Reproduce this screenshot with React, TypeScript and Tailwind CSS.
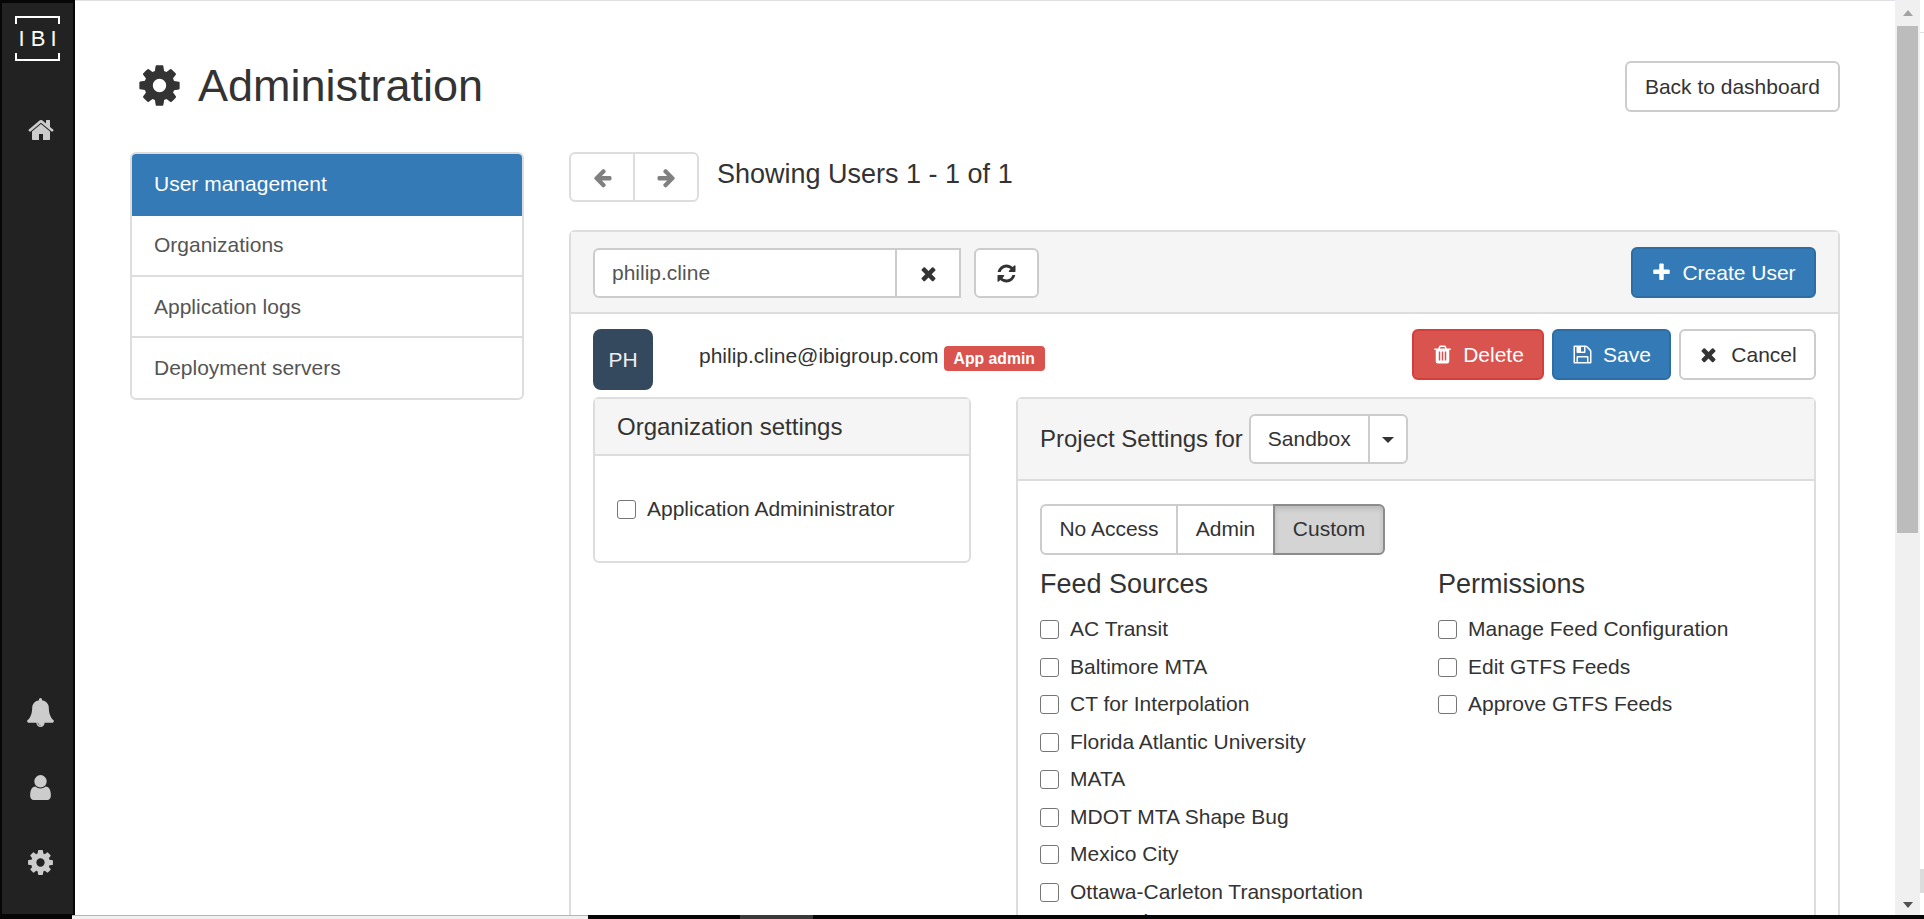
import React from "react";

const P = {
  cog: "M1152 896q0-106-75-181t-181-75-181 75-75 181 75 181 181 75 181-75 75-181zm512-109v222q0 12-8 23t-20 13l-185 28q-19 54-39 91 35 50 107 138 10 12 10 25t-9 23q-27 37-99 108t-94 71q-12 0-26-9l-138-108q-44 23-91 38-16 136-29 186-7 28-36 28h-222q-14 0-24.5-8.5t-11.5-21.5l-28-184q-49-16-90-37l-141 107q-10 9-25 9-14 0-25-11-126-114-165-168-7-10-7-23 0-12 8-23 15-21 51-66.5t54-70.5q-27-50-41-99l-183-27q-13-2-21-12.5t-8-23.5v-222q0-12 8-23t19-13l186-28q14-46 39-92-40-57-107-138-10-12-10-24 0-10 9-23 26-36 98.5-107.5t94.5-71.5q13 0 26 10l138 107q44-23 91-38 16-136 29-186 7-28 36-28h222q14 0 24.5 8.5t11.5 21.5l28 184q49 16 90 37l142-107q9-9 24-9 13 0 25 10 129 119 165 170 7 8 7 22 0 12-8 23-15 21-51 66.5t-54 70.5q26 50 41 98l183 28q13 2 21 12.5t8 23.5z",
  times: "M1490 1322q0 40-28 68l-136 136q-28 28-68 28t-68-28l-294-294-294 294q-28 28-68 28t-68-28l-136-136q-28-28-28-68t28-68l294-294-294-294q-28-28-28-68t28-68l136-136q28-28 68-28t68 28l294 294 294-294q28-28 68-28t68 28l136 136q28 28 28 68t-28 68l-294 294 294 294q28 28 28 68z",
  plus: "M1600 736v192q0 40-28 68t-68 28h-416v416q0 40-28 68t-68 28h-192q-40 0-68-28t-28-68v-416h-416q-40 0-68-28t-28-68v-192q0-40 28-68t68-28h416v-416q0-40 28-68t68-28h192q40 0 68 28t28 68v416h416q40 0 68 28t28 68z",
  left: "M1664 896v128q0 53-32.5 90.5t-84.5 37.5h-704l293 294q38 36 38 90t-38 90l-75 76q-37 37-90 37-52 0-91-37l-651-652q-37-37-37-90 0-52 37-91l651-650q38-38 91-38 52 0 90 38l75 74q38 38 38 91t-38 91l-293 293h704q52 0 84.5 37.5t32.5 90.5z",
  right: "M1600 960q0 54-37 91l-651 651q-39 37-91 37-51 0-90-37l-75-75q-38-38-38-91t38-91l293-293h-704q-52 0-84.5-37.5t-32.5-90.5v-128q0-53 32.5-90.5t84.5-37.5h704l-293-294q-38-36-38-90t38-90l75-75q38-38 90-38 53 0 91 38l651 651q37 35 37 90z",
  refresh: "M1639 1056q0 5-1 7-64 268-268 434.5t-478 166.5q-146 0-282.5-55t-243.5-157l-129 129q-19 19-45 19t-45-19-19-45v-448q0-26 19-45t45-19h448q26 0 45 19t19 45-19 45l-137 137q71 66 161 102t187 36q134 0 250-65t186-179q11-17 53-117 8-23 30-23h192q13 0 22.5 9.5t9.5 22.5zm25-800v448q0 26-19 45t-45 19h-448q-26 0-45-19t-19-45 19-45l138-138q-148-137-349-137-134 0-250 65t-186 179q-11 17-53 117-8 23-30 23h-199q-13 0-22.5-9.5t-9.5-22.5v-7q65-268 270-434.5t480-166.5q146 0 284 55.5t245 156.5l130-129q19-19 45-19t45 19 19 45z",
  home: "M1472 992v480q0 26-19 45t-45 19h-384v-384h-256v384h-384q-26 0-45-19t-19-45v-480q0-1 .5-3t.5-3l575-474 575 474q1 2 1 6zm223-69l-62 74q-8 9-21 11h-3q-13 0-21-7l-692-577-692 577q-12 8-24 7-13-2-21-11l-62-74q-8-10-7-23.5t11-21.5l719-599q32-26 76-26t76 26l244 204v-195q0-14 9-23t23-9h192q14 0 23 9t9 23v408l219 182q10 8 11 21.5t-7 23.5z",
  bell: "M912 1696q0-16-16-16-59 0-101.5-42.5t-42.5-101.5q0-16-16-16t-16 16q0 73 51.5 124.5t124.5 51.5q16 0 16-16zm816-288q0 52-38 90t-90 38h-448q0 106-75 181t-181 75-181-75-75-181h-448q-52 0-90-38t-38-90q50-42 91-88t85-119.5 74.5-158.5 50-206 19.5-260q0-152 117-282.5t307-158.5q-8-19-8-39 0-40 28-68t68-28 68 28 28 68q0 20-8 39 190 28 307 158.5t117 282.5q0 139 19.5 260t50 206 74.5 158.5 85 119.5 91 88z",
  user: "M1536 1399q0 109-62.5 187t-150.5 78h-854q-88 0-150.5-78t-62.5-187q0-85 8.5-160.5t31.5-152 58.5-131 94-89 134.5-34.5q131 128 313 128t313-128q76 0 134.5 34.5t94 89 58.5 131 31.5 152 8.5 160.5zm-256-887q0 159-112.5 271.5t-271.5 112.5-271.5-112.5-112.5-271.5 112.5-271.5 271.5-112.5 271.5 112.5 112.5 271.5z",
  trash: "M704 1376v-704q0-14-9-23t-23-9h-64q-14 0-23 9t-9 23v704q0 14 9 23t23 9h64q14 0 23-9t9-23zm256 0v-704q0-14-9-23t-23-9h-64q-14 0-23 9t-9 23v704q0 14 9 23t23 9h64q14 0 23-9t9-23zm256 0v-704q0-14-9-23t-23-9h-64q-14 0-23 9t-9 23v704q0 14 9 23t23 9h64q14 0 23-9t9-23zm-544-992h448l-48-117q-7-9-17-11h-317q-10 2-17 11zm928 32v64q0 14-9 23t-23 9h-96v948q0 83-47 143.5t-113 60.5h-832q-66 0-113-58.5t-47-141.5v-952h-96q-14 0-23-9t-9-23v-64q0-14 9-23t23-9h309l70-167q15-37 54-63t79-26h320q40 0 79 26t54 63l70 167h309q14 0 23 9t9 23z",
  save: "M512 1536h768v-384h-768v384zm896 0h128v-896q0-14-10-38.5t-20-34.5l-281-281q-10-10-34-20t-39-10v416q0 40-28 68t-68 28h-576q-40 0-68-28t-28-68v-416h-128v1280h128v-416q0-40 28-68t68-28h832q40 0 68 28t28 68v416zm-384-928v-320q0-13-9.5-22.5t-22.5-9.5h-192q-13 0-22.5 9.5t-9.5 22.5v320q0 13 9.5 22.5t22.5 9.5h192q13 0 22.5-9.5t9.5-22.5zm640 32v928q0 40-28 68t-68 28h-1344q-40 0-68-28t-28-68v-1344q0-40 28-68t68-28h928q40 0 88 20t76 48l280 280q28 28 48 76t20 88z",
};

function Icon({ d, className }: { d: string; className: string }) {
  return (
    <svg viewBox="0 0 1792 1792" className={className} fill="currentColor">
      <path d={d} />
    </svg>
  );
}

function Check({ label }: { label: string }) {
  return (
    <label className="flex items-start gap-[11px] mb-[7.5px] leading-[30px]">
      <input type="checkbox" className="appearance-none shrink-0 w-[19px] h-[19px] mt-[6px] bg-white border border-[#767676] rounded-[3px]" />
      <span>{label}</span>
    </label>
  );
}

const feeds = [
  "AC Transit",
  "Baltimore MTA",
  "CT for Interpolation",
  "Florida Atlantic University",
  "MATA",
  "MDOT MTA Shape Bug",
  "Mexico City",
  "Ottawa-Carleton Transportation Consortium",
];

export default function App() {
  return (
    <div className="w-[1924px] h-[919px] overflow-hidden flex flex-col bg-white text-[#333] text-[21px] font-['Liberation_Sans',Arial,sans-serif]">
      <div className="flex flex-1 min-h-0">
        {/* Sidebar */}
        <aside className="w-[75px] shrink-0 flex flex-col justify-between bg-[#222] border-l-2 border-r-2 border-t-[3px] border-b border-[#060606] text-[#ccc]">
          <div>
            <svg viewBox="0 0 45 45" className="w-[45px] h-[45px] mt-[13px] ml-[13px] text-white" fill="none" stroke="currentColor" strokeWidth="2">
              <path d="M1 8V1H44V8M1 37V44H44V37" />
              <text x="6.5" y="30" textAnchor="middle" fontFamily="Liberation Sans" fontSize="22" fill="currentColor" stroke="none">I</text>
              <text x="23" y="30" textAnchor="middle" fontFamily="Liberation Sans" fontSize="22" fill="currentColor" stroke="none">B</text>
              <text x="38.5" y="30" textAnchor="middle" fontFamily="Liberation Sans" fontSize="22" fill="currentColor" stroke="none">I</text>
            </svg>
            <div className="mt-[55px] ml-[25px]">
              <Icon d={P.home} className="w-[28px] h-[28px]" />
            </div>
          </div>
          <div className="flex flex-col items-center gap-[46px] pb-[37px] pl-[5px]">
            <Icon d={P.bell} className="w-[29px] h-[29px]" />
            <Icon d={P.user} className="w-[29px] h-[29px]" />
            <Icon d={P.cog} className="w-[29px] h-[29px]" />
          </div>
        </aside>

        {/* Main */}
        <main className="flex-1 min-w-0 overflow-hidden border-t border-[#dfe0e6] pl-[55px] pr-[55px]">
          <div className="flex items-center justify-between h-[51px] mt-[60px] mb-[40px]">
            <h1 className="flex items-center font-normal text-[45px] leading-none pl-[6px] pb-[2px]">
              <Icon d={P.cog} className="w-[47px] h-[47px] mr-[15px]" />
              Administration
            </h1>
            <button className="h-[51px] px-[18px] bg-white border-2 border-[#ccc] rounded-[6px]">Back to dashboard</button>
          </div>

          <div className="flex gap-[45px] items-start">
            {/* Left menu */}
            <nav className="w-[394px] shrink-0 border-2 border-[#ddd] rounded-[6px] overflow-hidden text-[#555]">
              <div className="h-[62px] flex items-center pl-[22px] pb-[2px] bg-[#337ab7] text-white">User management</div>
              <div className="h-[61px] flex items-center pl-[22px] pb-[1px] border-b-2 border-[#ddd]">Organizations</div>
              <div className="h-[61px] flex items-center pl-[22px] border-b-2 border-[#ddd]">Application logs</div>
              <div className="h-[60px] flex items-center pl-[22px]">Deployment servers</div>
            </nav>

            {/* Right column */}
            <div className="flex-1 min-w-0">
              <div className="flex items-start h-[50px] mb-[28px]">
                <div className="flex h-[50px] w-[130px] border-2 border-[#ddd] rounded-[6px] text-[#808080]">
                  <div className="w-[64px] flex items-center justify-center border-r-2 border-[#ddd]">
                    <Icon d={P.left} className="w-[21px] h-[21px]" />
                  </div>
                  <div className="flex-1 flex items-center justify-center">
                    <Icon d={P.right} className="w-[21px] h-[21px]" />
                  </div>
                </div>
                <h4 className="ml-[18px] font-normal text-[27px] leading-[30px] mt-[7px]">Showing Users 1 - 1 of 1</h4>
              </div>

              <section className="border-2 border-b-0 border-[#ddd] rounded-t-[6px]">
                <div className="h-[82px] px-[22px] bg-[#f5f5f5] border-b-2 border-[#ddd] flex items-center justify-between">
                  <div className="flex items-center gap-[13px] mt-[2px]">
                    <div className="flex h-[50px] w-[368px] bg-white border-2 border-[#ccc] rounded-l-[6px]">
                      <div className="flex-1 flex items-center pl-[17px] text-[#555]">philip.cline</div>
                      <div className="w-[64px] flex items-center justify-center border-l-2 border-[#ccc]">
                        <Icon d={P.times} className="w-[21px] h-[21px]" />
                      </div>
                    </div>
                    <div className="w-[65px] h-[50px] flex items-center justify-center bg-white border-2 border-[#ccc] rounded-[6px]">
                      <Icon d={P.refresh} className="w-[21px] h-[21px]" />
                    </div>
                  </div>
                  <button className="h-[51px] w-[185px] mt-[1px] flex items-center justify-center gap-[10px] bg-[#337ab7] border-2 border-[#2e6da4] rounded-[6px] text-white">
                    <Icon d={P.plus} className="w-[21px] h-[21px]" />
                    Create User
                  </button>
                </div>

                <div className="px-[22px] pt-[15px]">
                  <div className="flex items-start h-[61px] mb-[7px]">
                    <div className="w-[60px] h-[61px] flex items-center justify-center bg-[#34495e] rounded-[8px] text-[#eee]">PH</div>
                    <span className="ml-[46px] mt-[12px] leading-[30px]">philip.cline@ibigroup.com</span>
                    <span className="ml-[5px] mt-[17px] h-[25px] px-[10px] flex items-center bg-[#d9534f] rounded-[4px] text-white font-bold text-[15.75px]">App admin</span>
                    <div className="ml-auto flex gap-[8px]">
                      <button className="h-[51px] w-[132px] flex items-center justify-center gap-[10px] bg-[#d9534f] border-2 border-[#d43f3a] rounded-[6px] text-white">
                        <Icon d={P.trash} className="w-[21px] h-[21px]" />
                        Delete
                      </button>
                      <button className="h-[51px] w-[119px] flex items-center justify-center gap-[10px] bg-[#337ab7] border-2 border-[#2e6da4] rounded-[6px] text-white">
                        <Icon d={P.save} className="w-[21px] h-[21px]" />
                        Save
                      </button>
                      <button className="h-[51px] w-[137px] flex items-center justify-center gap-[12px] bg-white border-2 border-[#ccc] rounded-[6px]">
                        <Icon d={P.times} className="w-[21px] h-[21px]" />
                        Cancel
                      </button>
                    </div>
                  </div>

                  <div className="flex gap-[45px] items-start">
                    <div className="w-[378px] shrink-0 border-2 border-[#ddd] rounded-[6px]">
                      <div className="h-[57px] flex items-center px-[22px] bg-[#f5f5f5] border-b-2 border-[#ddd] text-[24px]">Organization settings</div>
                      <div className="px-[22px] pt-[38px] pb-[29px]">
                        <Check label="Application Admininistrator" />
                      </div>
                    </div>

                    <div className="flex-1 min-w-0 border-2 border-[#ddd] rounded-t-[6px]">
                      <div className="h-[82px] flex items-center px-[22px] bg-[#f5f5f5] border-b-2 border-[#ddd] text-[24px]">
                        Project Settings for
                        <div className="ml-[6px] flex h-[50px] w-[159px] bg-white border-2 border-[#ccc] rounded-[6px] text-[21px]">
                          <div className="w-[119px] flex items-center justify-center border-r-2 border-[#ccc]">Sandbox</div>
                          <div className="flex-1 flex items-center justify-center">
                            <span className="w-0 h-0 mt-[2px] border-x-[6px] border-x-transparent border-t-[6px] border-t-[#333]" />
                          </div>
                        </div>
                      </div>
                      <div className="px-[22px] pt-[23px]">
                        <div className="flex h-[51px] w-[345px]">
                          <div className="w-[138px] flex items-center justify-center pb-[1px] border-2 border-[#ccc] rounded-l-[6px]">No Access</div>
                          <div className="w-[95px] flex items-center justify-center pb-[1px] border-y-2 border-[#ccc]">Admin</div>
                          <div className="flex-1 flex items-center justify-center pb-[1px] bg-[#d4d4d4] border-2 border-[#8c8c8c] rounded-r-[6px] shadow-[inset_0_3px_5px_rgba(0,0,0,0.125)]">Custom</div>
                        </div>
                        <div className="flex">
                          <div className="w-[398px] shrink-0 pr-[20px]">
                            <h4 className="font-normal text-[27px] leading-[30px] mt-[14px] mb-[15px]">Feed Sources</h4>
                            {feeds.map((f) => (
                              <Check key={f} label={f} />
                            ))}
                          </div>
                          <div className="flex-1">
                            <h4 className="font-normal text-[27px] leading-[30px] mt-[14px] mb-[15px]">Permissions</h4>
                            <Check label="Manage Feed Configuration" />
                            <Check label="Edit GTFS Feeds" />
                            <Check label="Approve GTFS Feeds" />
                          </div>
                        </div>
                      </div>
                    </div>
                  </div>
                </div>
              </section>
            </div>
          </div>
        </main>

        {/* Scrollbar */}
        <div className="w-[25px] shrink-0 flex flex-col items-center bg-[#f0f0f0] pt-[10px] pb-[7px]">
          <span className="w-0 h-0 border-x-[5px] border-x-transparent border-b-[6px] border-b-[#a3a3a3]" />
          <div className="w-[21px] h-[507px] mt-[10px] bg-[#bcbcbc]" />
          <div className="flex-1" />
          <span className="w-0 h-0 border-x-[5px] border-x-transparent border-t-[6px] border-t-[#505050]" />
        </div>
        <div className="w-[4px] shrink-0 flex flex-col">
          <div className="h-[33px] border-b border-[#e0e0e0]" />
          <div className="h-[836px]" />
          <div className="h-[24px] bg-[#dcdcdc]" />
        </div>
      </div>

      {/* Bottom strip */}
      <div className="h-[4px] shrink-0 flex bg-[#060606]">
        <div className="w-[72px]" />
        <div className="w-[516px] bg-[#f0f0f0] border-t border-[#b5b5b5]" />
        <div className="w-[152px]" />
        <div className="w-[73px] bg-[#3a3a3a]" />
      </div>
    </div>
  );
}
